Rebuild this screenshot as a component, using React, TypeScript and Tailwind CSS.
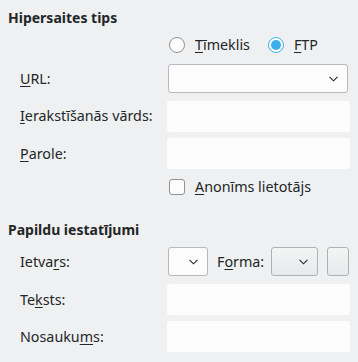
const font = { fontFamily: '"Noto Sans", "Open Sans", sans-serif' };

const U = ({ children }: { children: string }) => (
  <span className="underline decoration-1 underline-offset-2">{children}</span>
);

const Chevron = () => (
  <svg width="9" height="6" viewBox="0 0 9 6" fill="none">
    <path d="M0.5 0.8 L4.5 4.8 L8.5 0.8" stroke="#232627" strokeWidth="1.1" />
  </svg>
);

const Label = ({ children }: { children: React.ReactNode }) => (
  <div className="w-[147px] shrink-0 whitespace-nowrap pl-[20px] text-[14.3px] text-[#232627]">{children}</div>
);

const TextField = () => <div className="h-[31px] w-[183px] rounded-[2px] bg-[#fcfcfc]" />;

export default function App() {
  return (
    <div className="h-[362px] w-[358px] bg-[#eff0f1] text-[#232627]" style={font}>
      <div className="pt-[8px] pl-[8px] text-[14px] font-bold leading-[20px]">Hipersaites tips</div>

      <div className="mt-[9px] flex h-[16px] items-center whitespace-nowrap pl-[169px] text-[14.3px]">
        <div className="h-[16px] w-[16px] rounded-full border border-[#909192] bg-[#fcfcfc]" />
        <span className="ml-[10px]">
          <U>T</U>īmeklis
        </span>
        <div className="ml-[18px] flex h-[16px] w-[16px] items-center justify-center rounded-full border border-[#3daee9] bg-[#fcfcfc]">
          <div className="h-[10px] w-[10px] rounded-full bg-[#3daee9]" />
        </div>
        <span className="ml-[10px]">
          <U>F</U>TP
        </span>
      </div>

      <div className="mt-[11px] flex h-[29px] items-center">
        <Label>
          <U>U</U>RL:
        </Label>
        <div className="ml-[21px] flex h-[29px] w-[180px] items-center justify-end rounded-[3px] border border-[#b8b9ba] bg-[#fcfcfc] pr-[9px]">
          <Chevron />
        </div>
      </div>

      <div className="mt-[7px] flex h-[32px] items-center">
        <Label>
          <U>I</U>erakstīšanās vārds:
        </Label>
        <div className="ml-[20px]">
          <TextField />
        </div>
      </div>

      <div className="mt-[6px] flex h-[31px] items-center">
        <Label>
          <U>P</U>arole:
        </Label>
        <div className="ml-[20px]">
          <TextField />
        </div>
      </div>

      <div className="mt-[10px] flex h-[16px] items-center whitespace-nowrap pl-[169px] text-[14.3px]">
        <div className="h-[16px] w-[16px] rounded-[3px] border border-[#909192] bg-[#fcfcfc]" />
        <span className="ml-[10px]">
          <U>A</U>nonīms lietotājs
        </span>
      </div>

      <div className="mt-[25px] pl-[8px] text-[14px] font-bold leading-[20px]">Papildu iestatījumi</div>

      <div className="mt-[7px] flex h-[29px] items-center">
        <Label>
          Ietva<U>r</U>s:
        </Label>
        <div className="ml-[21px] flex h-[29px] w-[40px] items-center justify-end rounded-[3px] border border-[#b8b9ba] bg-[#fcfcfc] pr-[9px]">
          <Chevron />
        </div>
        <span className="ml-[9px] w-[54px] whitespace-nowrap text-[14.3px]">
          F<U>o</U>rma:
        </span>
        <div className="flex h-[29px] w-[47px] items-center justify-end rounded-[3px] border border-[#b0b1b2] bg-gradient-to-b from-[#f3f4f4] to-[#e8e9ea] pr-[9px]">
          <Chevron />
        </div>
        <div className="ml-[9px] h-[29px] w-[22px] rounded-[3px] border border-[#b0b1b2] bg-gradient-to-b from-[#f3f4f4] to-[#e8e9ea]" />
      </div>

      <div className="mt-[8px] flex h-[31px] items-center">
        <Label>
          Te<U>k</U>sts:
        </Label>
        <div className="ml-[20px]">
          <TextField />
        </div>
      </div>

      <div className="mt-[6px] flex h-[31px] items-center">
        <Label>
          Nosauku<U>m</U>s:
        </Label>
        <div className="ml-[20px]">
          <TextField />
        </div>
      </div>
    </div>
  );
}
